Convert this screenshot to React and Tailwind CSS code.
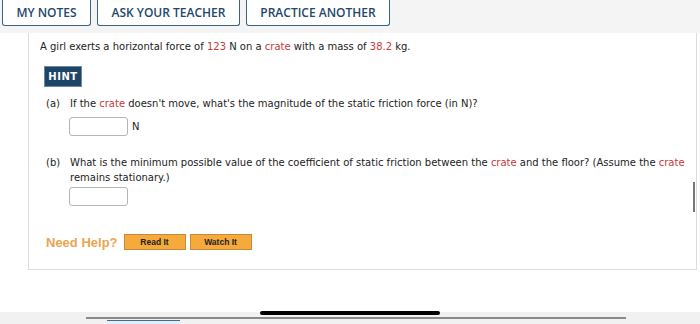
export default function App() {
  const red = "text-[#c8393b]";
  return (
    <div className="w-[700px] h-[324px] bg-white overflow-hidden relative flex flex-col" style={{ fontFamily: '"DejaVu Sans", Verdana, sans-serif' }}>
      <div className="h-[33px] bg-[#f4f4f4] flex items-start gap-[6px] pl-[2px] shrink-0">
        {["MY NOTES", "ASK YOUR TEACHER", "PRACTICE ANOTHER"].map((t, i) => (
          <div
            key={t}
            className={`h-[26px] border border-t-0 border-[#3b6382] rounded-b-[3px] bg-white flex items-center justify-center text-[12px] font-semibold text-[#24476a] ${i === 0 ? "w-[89px]" : i === 1 ? "w-[143px]" : "w-[144px]"}`}
            style={{ fontFamily: '"Open Sans", sans-serif' }}
          >
            {t}
          </div>
        ))}
      </div>
      <div className="ml-[28px] mr-[3px] h-[237px] border-l border-r border-b border-[#dcdcdc] text-[10px] leading-[15px] text-[#222] relative">
        <div className="pl-[11px] pt-[6px]">
          A girl exerts a horizontal force of <span className={red}>123</span> N on a <span className={red}>crate</span> with a mass of <span className={red}>38.2</span> kg.
        </div>
        <div className="ml-[15px] mt-[12px] w-[38px] h-[21px] bg-[#1e4468] border border-[#6b8aa8] text-white font-bold text-[10px] tracking-[0.5px] flex items-center justify-center">
          HINT
        </div>
        <div className="flex pl-[17px] mt-[9px]">
          <span className="w-[24px] shrink-0">(a)</span>
          <span>If the <span className={red}>crate</span> doesn't move, what's the magnitude of the static friction force (in N)?</span>
        </div>
        <div className="flex items-center pl-[40px] mt-[6px]">
          <div className="w-[59px] h-[19px] border border-[#b5b5b5] rounded-[3px]" />
          <span className="ml-[4px] text-[10px]">N</span>
        </div>
        <div className="flex pl-[17px] mt-[19px]">
          <span className="w-[24px] shrink-0">(b)</span>
          <span className="pr-[6px]">What is the minimum possible value of the coefficient of static friction between the <span className={red}>crate</span> and the floor? (Assume the <span className={red}>crate</span> remains stationary.)</span>
        </div>
        <div className="pl-[40px] mt-[2px]">
          <div className="w-[59px] h-[19px] border border-[#b5b5b5] rounded-[3px]" />
        </div>
        <div className="flex items-center pl-[17px] mt-[28px]">
          <span className="text-[13px] font-bold text-[#eaa550] mr-[6px]" style={{ fontFamily: '"Liberation Sans", Arial, sans-serif' }}>Need Help?</span>
          <div className="w-[62px] h-[16px] bg-[#f7aa3c] border border-[#c88a3a] text-[8.5px] font-bold text-[#222] flex items-center justify-center mr-[4px]" style={{ fontFamily: '"Liberation Sans", Arial, sans-serif' }}>Read It</div>
          <div className="w-[62px] h-[16px] bg-[#f7aa3c] border border-[#c88a3a] text-[8.5px] font-bold text-[#222] flex items-center justify-center" style={{ fontFamily: '"Liberation Sans", Arial, sans-serif' }}>Watch It</div>
        </div>
        <div className="absolute right-[1px] top-[149px] w-[2px] h-[30px] bg-[#777]" />
      </div>
      <div className="mt-auto h-[12px] bg-[#f1f1f1] relative">
        <div className="absolute left-[86px] top-[5px] w-[540px] h-[2px] bg-[#8a8a8a]" />
        <div className="absolute left-[260px] top-[-1px] w-[180px] h-[4px] bg-black rounded-[2px]" />
        <div className="absolute left-[107px] top-[8px] w-[73px] h-[4px] bg-[#dff0f8] border-t border-[#4b6a88]" />
      </div>
    </div>
  );
}
